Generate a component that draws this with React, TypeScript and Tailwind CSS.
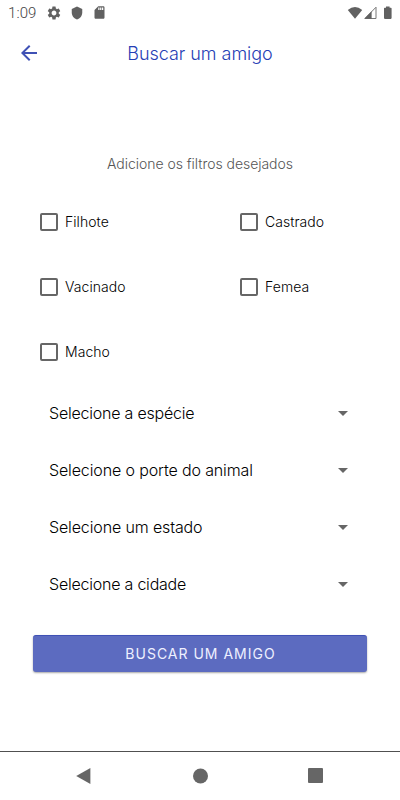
import { MdArrowBack, MdArrowDropDown, MdSdCard, MdSettings, MdShield } from 'react-icons/md';

const filters = ['Filhote', 'Castrado', 'Vacinado', 'Femea', 'Macho'];

const selects = [
  { label: 'Selecione a espécie', tracking: 'tracking-[-0.22px]' },
  { label: 'Selecione o porte do animal', tracking: 'tracking-[-0.13px]' },
  { label: 'Selecione um estado', tracking: 'tracking-[-0.13px]' },
  { label: 'Selecione a cidade', tracking: 'tracking-[-0.22px]' },
];

const StatusBar = () => {
  return (
    <div className="flex h-[25px] items-center justify-between pl-2 pr-[7px] text-[#616161]">
      <div className="flex items-center">
        <span className="w-[38px] pt-px font-['Roboto',sans-serif] text-[15px] font-light tracking-[0.1px] text-[#444]">1:09</span>
        <MdSettings className="size-4" />
        <MdShield className="ml-2 size-[14px]" />
        <MdSdCard className="ml-2 size-[15px]" />
      </div>
      <svg width="46" height="14" viewBox="0 0 46 14" fill="#616161">
        <path d="M0.8 4Q8 -1.8 15.2 4L8 12.8Z" />
        <path d="M29 1.2V12.5H18Z" fill="none" stroke="#777" />
        <path d="M24.6 5.2V12.8H17.2Z" />
        <path d="M39 .6h3.6v1.2h1.3q.7 0 .7.7v9.6q0 .8-.8.8h-6q-.8 0-.8-.8V2.500q0-.7.7-.7H39Z" />
      </svg>
    </div>
  );
};

const NavigationBar = () => {
  return (
    <nav className="mt-auto flex h-[49px] items-center justify-between border-t border-[#505050] pb-px pl-[75px] pr-[77px]">
      <svg width="16" height="16" viewBox="0 0 16 16">
        <path d="M1.2 8L15.4 0V16Z" fill="#666" />
      </svg>
      <svg width="16" height="16" viewBox="0 0 16 16">
        <circle cx="8.500" cy="8" r="7.500" fill="#666" />
      </svg>
      <span className="size-[15px] rounded-[1px] bg-[#666]" />
    </nav>
  );
};

const App = () => {
  return (
    <div className="flex h-screen flex-col bg-white font-['Inter','Lato',sans-serif] font-light">
      <StatusBar />
      <header className="grid h-14 grid-cols-[40px_1fr_40px] items-center px-[17px]">
        <MdArrowBack className="size-6 text-[#3f51b5]" />
        <h1 className="text-center text-[18px] tracking-[-0.03px] text-[#2640b5]">Buscar um amigo</h1>
      </header>
      <main className="flex flex-col pt-[73px]">
        <p className="text-center text-[14px] leading-5 tracking-[-0.04px] text-[#555]">Adicione os filtros desejados</p>
        <div className="mt-[15px] grid grid-cols-2 text-[14px] tracking-[0.05px] text-black">
          {filters.map((filter) => (
            <label key={filter} className="flex h-[65px] items-center gap-[7px] pl-10">
              <span className="size-[18px] rounded-[2px] border-2 border-[#666]" />
              {filter}
            </label>
          ))}
        </div>
        <div className="flex flex-col text-black">
          {selects.map((select) => (
            <button key={select.label} className="flex h-[57px] items-center justify-between pl-[49px] pr-[45px] text-[16px]">
              <span className={select.tracking}>{select.label}</span>
              <MdArrowDropDown className="size-6 text-[#666]" />
            </button>
          ))}
        </div>
        <button className="mx-[33px] mt-[23px] h-[37px] rounded-[3px] border-t border-[#3f51b5] bg-[#5c6bc0] pb-0.5 indent-[1px] text-[14px] font-normal tracking-[1px] text-[#eef0ff] shadow-[0_1px_2px_rgba(0,0,0,0.35)]">
          BUSCAR UM AMIGO
        </button>
      </main>
      <NavigationBar />
    </div>
  );
};

export default App;
